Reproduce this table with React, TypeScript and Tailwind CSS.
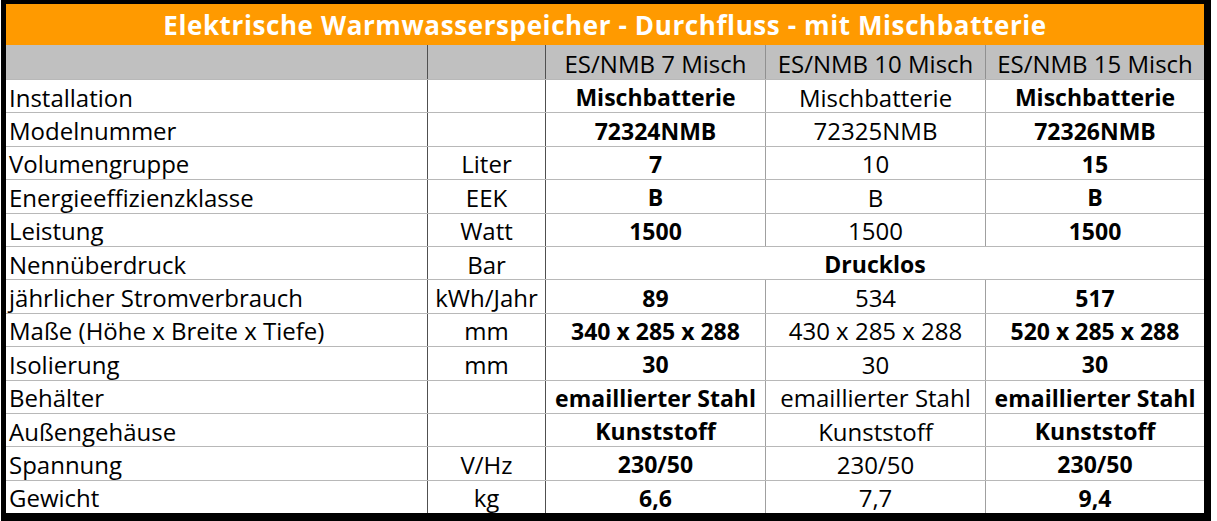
import React from "react";

type Row = {
  label: string;
  unit: string;
  values: string[];
  span?: boolean;
};

const rows: Row[] = [
  { label: "Installation", unit: "", values: ["Mischbatterie", "Mischbatterie", "Mischbatterie"] },
  { label: "Modelnummer", unit: "", values: ["72324NMB", "72325NMB", "72326NMB"] },
  { label: "Volumengruppe", unit: "Liter", values: ["7", "10", "15"] },
  { label: "Energieeffizienzklasse", unit: "EEK", values: ["B", "B", "B"] },
  { label: "Leistung", unit: "Watt", values: ["1500", "1500", "1500"] },
  { label: "Nennüberdruck", unit: "Bar", values: ["Drucklos"], span: true },
  { label: "jährlicher Stromverbrauch", unit: "kWh/Jahr", values: ["89", "534", "517"] },
  { label: "Maße (Höhe x Breite x Tiefe)", unit: "mm", values: ["340 x 285 x 288", "430 x 285 x 288", "520 x 285 x 288"] },
  { label: "Isolierung", unit: "mm", values: ["30", "30", "30"] },
  { label: "Behälter", unit: "", values: ["emaillierter Stahl", "emaillierter Stahl", "emaillierter Stahl"] },
  { label: "Außengehäuse", unit: "", values: ["Kunststoff", "Kunststoff", "Kunststoff"] },
  { label: "Spannung", unit: "V/Hz", values: ["230/50", "230/50", "230/50"] },
  { label: "Gewicht", unit: "kg", values: ["6,6", "7,7", "9,4"] },
];

const font = { fontFamily: "'Open Sans', Lato, sans-serif" };

export default function App() {
  return (
    <div className="bg-white w-[1217px] h-[521px]" style={font}>
      <div className="w-[1210px] ml-[1px] border-l-[5px] border-t-[4px] border-r-[7px] border-b-[8px] border-black">
        <div className="h-[41px] bg-[#ff9a00] flex items-center justify-center text-white font-bold text-[26px] leading-none pt-[1px] tracking-[0.6px]">
          Elektrische Warmwasserspeicher - Durchfluss - mit Mischbatterie
        </div>
        <div className="grid grid-cols-[422px_118px_220px_220px_218px] h-[34px] bg-[#c0c0c0] text-[24px] text-black leading-none">
          <div className="border-r border-[#505050]"></div>
          <div className="border-r border-[#505050]"></div>
          <div className="border-r border-[#909090] flex items-center justify-center pt-[3px]">ES/NMB 7 Misch</div>
          <div className="border-r border-[#909090] flex items-center justify-center pt-[3px]">ES/NMB 10 Misch</div>
          <div className="flex items-center justify-center pt-[3px]">ES/NMB 15 Misch</div>
        </div>
        {rows.map((r) => (
          <div
            key={r.label}
            className="grid grid-cols-[422px_118px_220px_220px_218px] h-[33.4px] text-[24px] text-black leading-none border-t border-[#b8b8b8]"
          >
            <div className="flex items-center pl-[3px] pt-[3px] border-r border-[#505050]">{r.label}</div>
            <div className="flex items-center justify-center pt-[3px] border-r border-[#505050]">{r.unit}</div>
            {r.span ? (
              <div className="col-span-3 flex items-center justify-center pt-[3px] font-bold text-[23px]">{r.values[0]}</div>
            ) : (
              <>
                <div className="flex items-center justify-center pt-[3px] border-r border-[#a0a0a0] font-bold text-[23px]">{r.values[0]}</div>
                <div className="flex items-center justify-center pt-[3px] border-r border-[#a0a0a0]">{r.values[1]}</div>
                <div className="flex items-center justify-center pt-[3px] font-bold text-[23px]">{r.values[2]}</div>
              </>
            )}
          </div>
        ))}
      </div>
    </div>
  );
}
